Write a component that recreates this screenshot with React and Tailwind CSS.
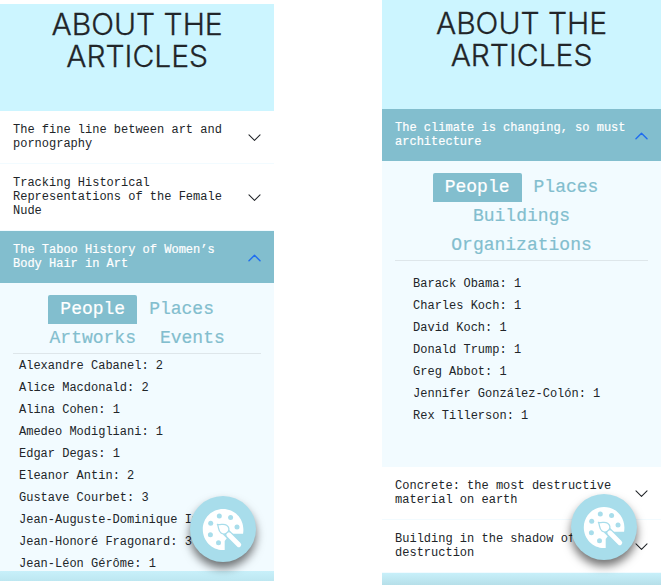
import React from "react";

const MONO = "font-['Liberation_Mono',monospace]";

function Chevron({ open }) {
  return (
    <svg
      viewBox="0 0 16 16"
      className={open ? "size-[13px] shrink-0 text-[#1f6df0]" : "size-[13px] shrink-0 text-[#212529]"}
      fill="none"
      stroke="currentColor"
      strokeWidth={open ? "1.7" : "1.3"}
      strokeLinecap="round"
      strokeLinejoin="round"
      aria-hidden="true"
    >
      <path d={open ? "M1.200 12 8 5.200 14.800 12" : "M1.200 4.800 8 11.600 14.800 4.800"} />
    </svg>
  );
}

function ArticleHeader({ title, open = false }) {
  return (
    <h2>
      <button
        type="button"
        aria-expanded={open}
        className={
          open
            ? "flex w-full items-center justify-between gap-2 bg-[#82bece] px-[13px] py-3 text-left text-xs leading-[14px] font-normal text-white [-webkit-text-stroke:0.2px_white]"
            : "flex w-full items-center justify-between gap-2 border-b border-[#f2fbff] bg-white px-[13px] py-3 text-left text-xs leading-[14px] font-normal text-[#212529]"
        }
      >
        <span>{title}</span>
        <Chevron open={open} />
      </button>
    </h2>
  );
}

function Tabs({ names }) {
  return (
    <div role="tablist" className="flex flex-wrap justify-center border-b border-[#dee6ea]">
      {names.map((name, i) => (
        <button
          key={name}
          type="button"
          role="tab"
          aria-selected={i === 0}
          className={
            i === 0
              ? "rounded-t-xs bg-[#82bece] px-3 text-lg leading-[29px] text-white [-webkit-text-stroke:0.2px_white]"
              : "px-3 text-lg leading-[29px] text-[#82bece] [-webkit-text-stroke:0.2px_#82bece]"
          }
        >
          {name}
        </button>
      ))}
    </div>
  );
}

function People({ rows }) {
  return rows.map(([name, count]) => (
    <li key={name} className="whitespace-nowrap">
      {name}: {count}
    </li>
  ));
}

function PaletteIcon() {
  return (
    <svg viewBox="0 0 66 66" className="h-full w-full" aria-hidden="true">
      <path
        fill="#fff"
        d="M34.700 53.900C22.500 54.900 12.800 45 12.800 33.400 12.800 22 21.800 13 33 13c11.400 0 20.400 9 20.400 20.400 0 1.400-.1 2.800-.3 4.300H42L37 42 34.700 45Z"
      />
      <g fill="#a8ddeb">
        <circle cx="29.300" cy="20" r="2.500" />
        <circle cx="40.600" cy="21.400" r="2.500" />
        <circle cx="47" cy="31" r="2.500" />
        <circle cx="20.700" cy="27.300" r="2.500" />
        <circle cx="20.400" cy="38.700" r="2.500" />
        <circle cx="28.500" cy="46.700" r="2.500" />
      </g>
      <path d="M35.500 35.800 49 49" stroke="#a8ddeb" strokeWidth="7.600" strokeLinecap="butt" />
      <path d="M38.800 38.800 48.800 48.800" stroke="#fff" strokeWidth="4.800" strokeLinecap="round" />
      <path
        d="M27.400 28.300c3.400.9 6.400-.9 9.200.9 2.400 1.600 3 4.300 1.500 6.500-1.700 2.400-4.800 2.900-7.100 1.300-3-2.100-1.900-5.300-3.600-8.700Z"
        fill="#fff"
        stroke="#a8ddeb"
        strokeWidth="1.300"
        strokeLinejoin="round"
      />
    </svg>
  );
}

function PaletteButton({ place }) {
  return (
    <button
      type="button"
      aria-label="Open palette"
      className={`absolute size-[66px] rounded-full bg-[#a8ddeb] shadow-[0_6px_10px_rgba(0,0,0,0.55)] ${place}`}
    >
      <PaletteIcon />
    </button>
  );
}

const HEADING = "text-center font-['Inter',sans-serif] text-[30px] leading-8 font-light text-[#212529] [-webkit-text-stroke:0.3px_#212529]";

const ARTISTS = [
  ["Alexandre Cabanel", 2],
  ["Alice Macdonald", 2],
  ["Alina Cohen", 1],
  ["Amedeo Modigliani", 1],
  ["Edgar Degas", 1],
  ["Eleanor Antin", 2],
  ["Gustave Courbet", 3],
  ["Jean-Auguste-Dominique Ingres", 1],
  ["Jean-Honoré Fragonard", 3],
  ["Jean-Léon Gérôme", 1],
];

const PUBLIC_FIGURES = [
  ["Barack Obama", 1],
  ["Charles Koch", 1],
  ["David Koch", 1],
  ["Donald Trump", 1],
  ["Greg Abbot", 1],
  ["Jennifer González-Colón", 1],
  ["Rex Tillerson", 1],
];

export default function App() {
  return (
    <main className={`flex items-start justify-between bg-white text-xs text-[#212529] ${MONO}`}>
      <section className="relative mt-1 w-[41.5%] overflow-hidden">
        <header className="bg-[#ccf5ff] px-3 pt-1 pb-[39px]">
          <h1 className={HEADING}>ABOUT THE ARTICLES</h1>
        </header>
        <ArticleHeader title="The fine line between art and pornography" />
        <ArticleHeader title="Tracking Historical Representations of the Female Nude" />
        <ArticleHeader title="The Taboo History of Women’s Body Hair in Art" open />
        <div className="bg-[#f2fbff] px-[13px] pt-3">
          <Tabs names={["People", "Places", "Artworks", "Events"]} />
          <ul className="h-[217px] overflow-hidden pt-px pl-1.5 leading-[22px]">
            <People rows={ARTISTS} />
          </ul>
        </div>
        <div className="h-2.5 bg-linear-to-b from-[#c8f0fa] to-[#bde7f1]" />
        <PaletteButton place="right-[18px] bottom-[19px]" />
      </section>

      <section className="relative w-[42.2%] overflow-hidden">
        <header className="bg-[#ccf5ff] px-3 pt-[7px] pb-[38px]">
          <h1 className={HEADING}>ABOUT THE ARTICLES</h1>
        </header>
        <ArticleHeader title="The climate is changing, so must architecture" open />
        <div className="bg-[#f2fbff] px-[13px] pt-3 pb-10">
          <Tabs names={["People", "Places", "Buildings", "Organizations"]} />
          <ul className="pt-3 pl-[18px] leading-[22px]">
            <People rows={PUBLIC_FIGURES} />
          </ul>
        </div>
        <ArticleHeader title="Concrete: the most destructive material on earth" />
        <ArticleHeader title="Building in the shadow of destruction" />
        <div className="h-3 bg-linear-to-b from-[#c8f0fa] to-[#b6dfe9]" />
        <PaletteButton place="right-6 bottom-[25px]" />
      </section>
    </main>
  );
}
